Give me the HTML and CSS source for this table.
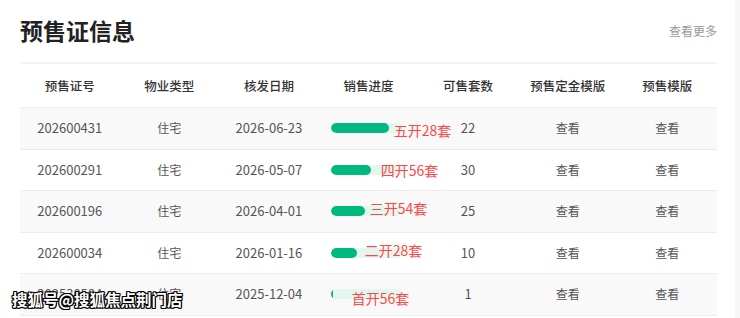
FILE: index.html
```html
<!DOCTYPE html>
<html lang="zh-CN">
<head>
<meta charset="utf-8">
<title>预售证信息</title>
<link rel="stylesheet" href="styles.css">
</head>
<body>
<div class="page">
  <main class="panel">
    <div class="panel-head">
      <h2 class="title">预售证信息</h2>
      <a class="more">查看更多</a>
    </div>
    <div class="table">
      <div class="row head">
        <div class="cell">预售证号</div>
        <div class="cell">物业类型</div>
        <div class="cell">核发日期</div>
        <div class="cell">销售进度</div>
        <div class="cell">可售套数</div>
        <div class="cell">预售定金模版</div>
        <div class="cell">预售模版</div>
      </div>
      <div class="row odd">
        <div class="cell num">202600431</div>
        <div class="cell">住宅</div>
        <div class="cell num">2026-06-23</div>
        <div class="cell prog"><div class="track"><div class="fill" style="width:58px"></div></div><span class="label" style="left:75px;top:2px">五开28套</span></div>
        <div class="cell num">22</div>
        <div class="cell">查看</div>
        <div class="cell">查看</div>
      </div>
      <div class="row">
        <div class="cell num">202600291</div>
        <div class="cell">住宅</div>
        <div class="cell num">2026-05-07</div>
        <div class="cell prog"><div class="track"><div class="fill" style="width:40px"></div></div><span class="label" style="left:62px;top:0px">四开56套</span></div>
        <div class="cell num">30</div>
        <div class="cell">查看</div>
        <div class="cell">查看</div>
      </div>
      <div class="row odd">
        <div class="cell num">202600196</div>
        <div class="cell">住宅</div>
        <div class="cell num">2026-04-01</div>
        <div class="cell prog"><div class="track"><div class="fill" style="width:34px"></div></div><span class="label" style="left:51px;top:-3px">三开54套</span></div>
        <div class="cell num">25</div>
        <div class="cell">查看</div>
        <div class="cell">查看</div>
      </div>
      <div class="row">
        <div class="cell num">202600034</div>
        <div class="cell">住宅</div>
        <div class="cell num">2026-01-16</div>
        <div class="cell prog"><div class="track"><div class="fill" style="width:26px"></div></div><span class="label" style="left:46px;top:-3px">二开28套</span></div>
        <div class="cell num">10</div>
        <div class="cell">查看</div>
        <div class="cell">查看</div>
      </div>
      <div class="row odd">
        <div class="cell num">202530584</div>
        <div class="cell">住宅</div>
        <div class="cell num">2025-12-04</div>
        <div class="cell prog"><div class="track"><div class="fill" style="width:2px"></div></div><span class="label" style="left:33px;top:4px">首开56套</span></div>
        <div class="cell num">1</div>
        <div class="cell">查看</div>
        <div class="cell">查看</div>
      </div>
    </div>
  </main>
  <div class="side"></div>
  <div class="watermark">搜狐号@搜狐焦点荆门店</div>
</div>
</body>
</html>
```

FILE: styles.css
```css
* { box-sizing: border-box; }
html, body { margin: 0; padding: 0; background: #fff; }
body {
  font-family: "Noto Sans CJK SC", "Noto Sans", sans-serif;
  color: #555;
}
.page {
  position: relative;
  display: flex;
  width: 740px;
  height: 318px;
  overflow: hidden;
}
.panel {
  width: 735px;
  padding: 0 18px 0 20px;
}
.side {
  flex: 1;
  background: #f6f6f6;
}
.panel-head {
  display: flex;
  justify-content: space-between;
  align-items: flex-end;
  height: 62px;
  padding-bottom: 17px;
}
.title {
  margin: 0;
  font-size: 23px;
  line-height: 30px;
  font-weight: 700;
  color: #222;
}
.more {
  font-size: 12px;
  line-height: 16px;
  color: #999;
  margin-bottom: 6px;
}
.table {
  border-top: 2px solid #f3f3f3;
}
.row {
  display: grid;
  grid-template-columns: repeat(7, 1fr);
  height: 41.5px;
  border-bottom: 1px solid #ececec;
  align-items: center;
}
.row.head {
  height: 44px;
  border-bottom: 1px solid #f0f0f0;
}
.row.odd { background: #f9f9f9; }
.cell {
  text-align: center;
  font-size: 12px;
  line-height: 20px;
  color: #555;
}
.head .cell {
  font-size: 12.5px;
  font-weight: 500;
  color: #333;
}
.cell.num { font-size: 13px; }
.cell.prog {
  position: relative;
  height: 100%;
  display: flex;
  align-items: center;
  padding-left: 12px;
}
.track {
  width: 72px;
  height: 10px;
  border-radius: 5px;
  background: #e3f7ef;
  overflow: hidden;
}
.fill {
  height: 100%;
  border-radius: 5px;
  background: #00b97f;
}
.label {
  position: absolute;
  top: 0;
  height: 100%;
  display: flex;
  align-items: center;
  font-size: 14px;
  color: #ff4747;
  white-space: nowrap;
}
.watermark {
  position: absolute;
  left: 12px;
  top: 288px;
  font-size: 15.5px;
  font-weight: 700;
  color: #fff;
  text-shadow:
    1px 1px 0 #000, -1px -1px 0 #000, 1px -1px 0 #000, -1px 1px 0 #000,
    0 1px 0 #000, 0 -1px 0 #000, 1px 0 0 #000, -1px 0 0 #000;
}
```
